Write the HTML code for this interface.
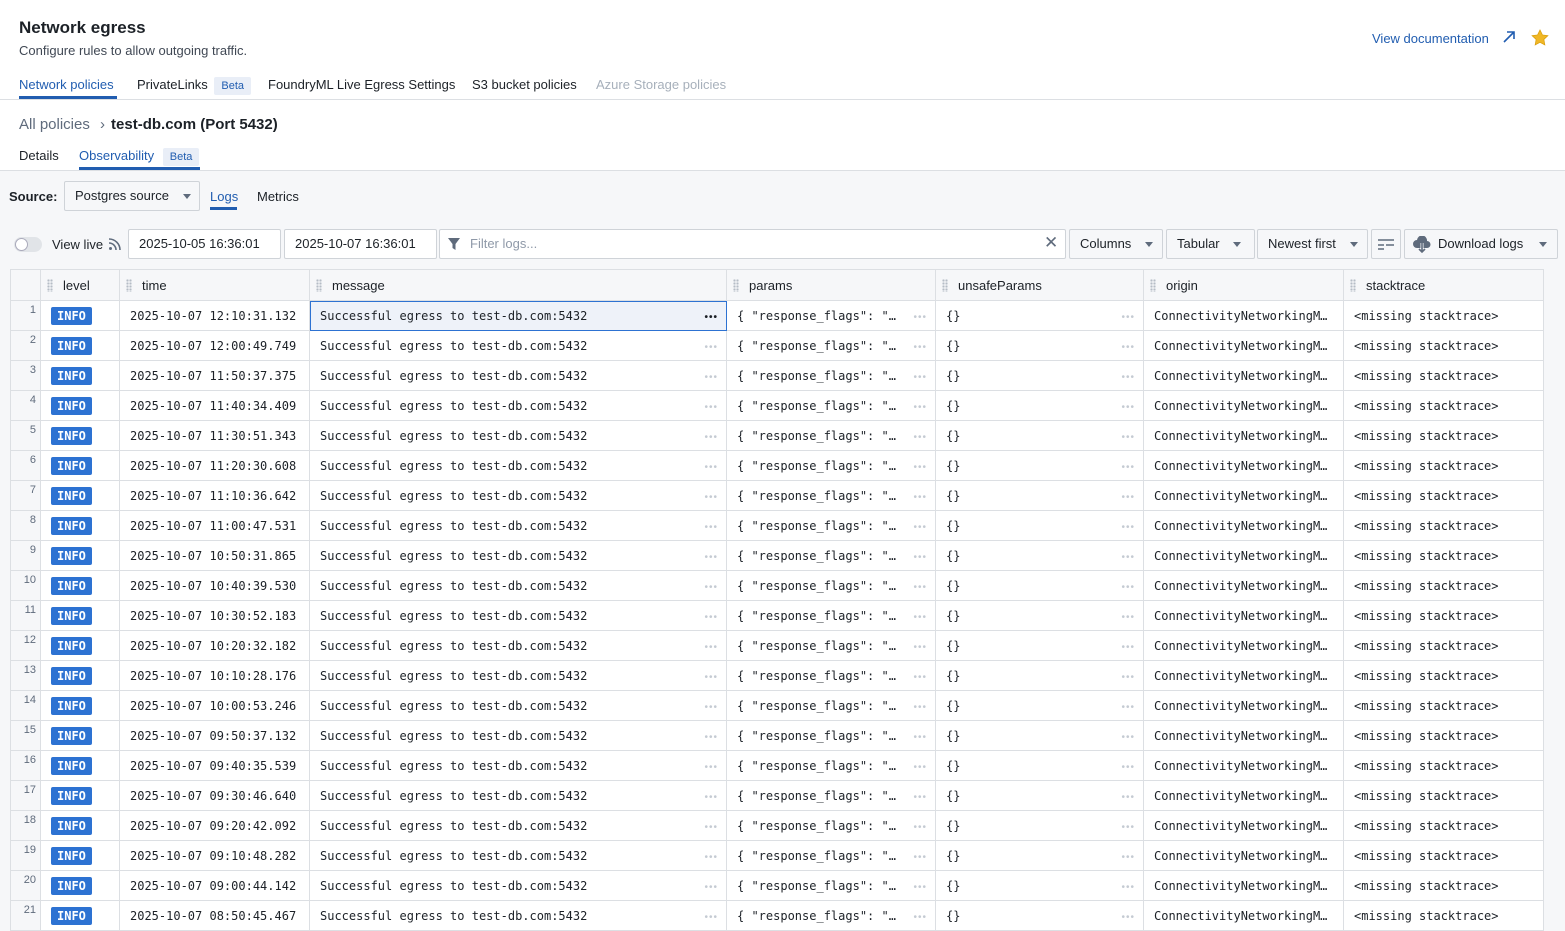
<!DOCTYPE html>
<html><head><meta charset="utf-8"><style>
*{box-sizing:border-box;margin:0;padding:0}
body{width:1565px;height:925px;overflow:hidden;font-family:"Liberation Sans",sans-serif;font-size:13px;color:#1c2127;background:#f6f7f9;position:relative}
.a{position:absolute;white-space:nowrap}
.top{position:absolute;left:0;top:0;width:1565px;height:171px;background:#fff;border-bottom:1px solid #dcdfe3}
.blue{color:#215db0}
.beta{background:#e9eef7;color:#215db0;font-size:11px;padding:3px 7px;border-radius:2px}
.ul{position:absolute;height:3px;background:#215db0}
.btn{position:absolute;top:229px;height:30px;background:#f6f7f9;border:1px solid #cfd3d8;border-radius:2px;padding:0 10px;line-height:28px;white-space:nowrap}
.car{display:inline-block;width:0;height:0;border-left:4px solid transparent;border-right:4px solid transparent;border-top:5px solid #5f6b7c;vertical-align:middle;margin-left:10px}
.inp{position:absolute;top:229px;height:30px;background:#fff;border:1px solid #cfd3d8;border-radius:2px;padding:0 10px;line-height:28px;white-space:nowrap}
table{position:absolute;left:10px;top:269px;border-collapse:collapse;table-layout:fixed;background:#fff;width:1533px}
td,th{border:1px solid #dcdfe3;height:30px;white-space:nowrap;overflow:hidden;font-weight:normal;text-align:left;padding:0 10px;position:relative}
th{background:#f6f7f9;height:31px;font-size:13px;padding-left:22px}
th .g{position:absolute;left:6px;top:9px;width:6px;height:13px;background:radial-gradient(circle,#b5bcc6 1px,transparent 1.3px) 0 0/3px 3px}
td{font-family:"DejaVu Sans Mono","Liberation Mono",monospace;font-size:12px;color:#1c2127}
td.n{background:#f6f7f9;font-family:"Liberation Sans",sans-serif;font-size:11px;color:#5f6b7c;text-align:right;vertical-align:top;padding:3px 4px 0 0}
.info{background:#2d72d2;color:#fff;font-weight:bold;font-size:12px;padding:2px 6px;border-radius:2px}
.dots{position:absolute;right:8px;top:11px;color:#c5cbd3;font-size:10px;letter-spacing:1px;font-family:"Liberation Sans",sans-serif}
.sel{background:#eef2f9;outline:1px solid #2d72d2;outline-offset:-1px}
.sel .dots{color:#1c2127;font-weight:bold}
</style></head><body>
<div class="top"></div>
<div class="a" style="left:19px;top:18px;font-size:17px;font-weight:bold">Network egress</div>
<div class="a" style="left:19px;top:43px;color:#404854">Configure rules to allow outgoing traffic.</div>
<div class="a blue" style="left:1372px;top:31px">View documentation</div>
<svg class="a" style="left:1502px;top:30px" width="14" height="14" viewBox="0 0 14 14"><path d="M2 12L12 2M5 2h7v7" stroke="#215db0" stroke-width="1.6" fill="none"/></svg>
<svg class="a" style="left:1531px;top:29px" width="18" height="18" viewBox="0 0 20 20"><path d="M10 1l2.7 5.6 6.1.8-4.5 4.2 1.1 6.1L10 14.8 4.6 17.7l1.1-6.1L1.2 7.4l6.1-.8z" fill="#f0b726" stroke="#d99e0b" stroke-width=".8"/></svg>
<div class="a blue" style="left:19px;top:77px">Network policies</div><div class="ul" style="left:19px;top:96px;width:98px"></div>
<div class="a" style="left:137px;top:77px">PrivateLinks <span class="beta" style="margin-left:3px">Beta</span></div>
<div class="a" style="left:268px;top:77px">FoundryML Live Egress Settings</div>
<div class="a" style="left:472px;top:77px">S3 bucket policies</div>
<div class="a" style="left:596px;top:77px;color:#a7b0bb">Azure Storage policies</div>
<div class="a" style="left:0;top:99px;width:1565px;height:1px;background:#dcdfe3"></div>
<div class="a" style="left:19px;top:116px;font-size:15px;color:#5f6b7c">All policies <span style="margin:0 6px">›</span><b style="color:#1c2127">test-db.com (Port 5432)</b></div>
<div class="a" style="left:19px;top:148px">Details</div>
<div class="a blue" style="left:79px;top:148px">Observability <span class="beta" style="margin-left:5px">Beta</span></div><div class="ul" style="left:79px;top:167px;width:121px"></div>
<div class="a" style="left:9px;top:189px;font-weight:bold">Source:</div>
<div class="a" style="left:64px;top:181px;width:136px;height:30px;background:#f6f7f9;border:1px solid #cfd3d8;border-radius:2px;padding:0 10px;line-height:28px">Postgres source <span class="car"></span></div>
<div class="a blue" style="left:210px;top:189px">Logs</div><div class="ul" style="left:210px;top:207px;width:27px"></div>
<div class="a" style="left:257px;top:189px">Metrics</div>
<div class="a" style="left:14px;top:237px;width:28px;height:15px;border-radius:8px;background:#e1e4e8"><div style="position:absolute;left:1px;top:1px;width:13px;height:13px;border-radius:50%;background:#fff;border:1px solid #aab"></div></div>
<div class="a" style="left:52px;top:237px">View live</div>
<svg class="a" style="left:108px;top:237px" width="14" height="14" viewBox="0 0 14 14"><circle cx="2.5" cy="11.5" r="1.5" fill="#5f6b7c"/><path d="M1 6a7 7 0 0 1 7 7M1 2a11 11 0 0 1 11 11" stroke="#5f6b7c" stroke-width="1.6" fill="none"/></svg>
<div class="inp" style="left:128px;width:153px">2025-10-05 16:36:01</div>
<div class="inp" style="left:284px;width:153px">2025-10-07 16:36:01</div>
<div class="inp" style="left:439px;width:627px;color:#8f99a8;padding-left:30px">Filter logs...</div>
<svg class="a" style="left:447px;top:237px" width="14" height="14" viewBox="0 0 14 14"><path d="M1 1h12L8.5 7v6L5.5 11V7z" fill="#5f6b7c"/></svg>
<div class="a" style="left:1044px;top:233px;font-size:17px;color:#5f6b7c">✕</div>
<div class="btn" style="left:1069px;width:94px">Columns <span class="car"></span></div>
<div class="btn" style="left:1166px;width:89px">Tabular <span class="car"></span></div>
<div class="btn" style="left:1257px;width:111px">Newest first <span class="car"></span></div>
<div class="btn" style="left:1371px;width:30px;padding:0"><svg style="position:absolute;left:6px;top:8px" width="16" height="12" viewBox="0 0 16 12"><path d="M0 2h16M0 7h6M8 7h8M0 11h6" stroke="#5f6b7c" stroke-width="1.5"/></svg></div>
<div class="btn" style="left:1404px;width:154px;padding-left:33px">Download logs <span class="car" style="margin-left:12px"></span><svg style="position:absolute;left:8px;top:6px" width="18" height="17" viewBox="0 0 18 17"><path d="M4 12a4 4 0 0 1 0-8 5 5 0 0 1 10 1 3.5 3.5 0 0 1 0 7" fill="#5f6b7c"/><path d="M9 7v9M6 13l3 3 3-3" stroke="#f6f7f9" stroke-width="3" fill="none"/><path d="M9 7v9M6 13l3 3 3-3" stroke="#5f6b7c" stroke-width="1.6" fill="none"/></svg></div>
<div class="a" style="left:1543px;top:269px;width:15px;height:656px;background:#f6f7f9;border-left:1px solid #dcdfe3"></div>
<table>
<colgroup><col style="width:30px"><col style="width:79px"><col style="width:190px"><col style="width:417px"><col style="width:209px"><col style="width:208px"><col style="width:200px"><col style="width:200px"></colgroup>
<tr><th style="background:#f6f7f9;padding:0"></th><th><span class="g"></span>level</th><th><span class="g"></span>time</th><th><span class="g"></span>message</th><th><span class="g"></span>params</th><th><span class="g"></span>unsafeParams</th><th><span class="g"></span>origin</th><th><span class="g"></span>stacktrace</th></tr>
<tbody id="tb">
</tbody></table>
<script>
var t=["12:10:31.132","12:00:49.749","11:50:37.375","11:40:34.409","11:30:51.343","11:20:30.608","11:10:36.642","11:00:47.531","10:50:31.865","10:40:39.530","10:30:52.183","10:20:32.182","10:10:28.176","10:00:53.246","09:50:37.132","09:40:35.539","09:30:46.640","09:20:42.092","09:10:48.282","09:00:44.142","08:50:45.467"];
var h="";for(var i=0;i<t.length;i++){h+='<tr><td class="n">'+(i+1)+'</td><td><span class="info">INFO</span></td><td>2025-10-07 '+t[i]+'</td><td'+(i==0?' class="sel"':'')+'>Successful egress to test-db.com:5432<span class="dots">•••</span></td><td>{ "response_flags": "…<span class="dots">•••</span></td><td>{}<span class="dots">•••</span></td><td>ConnectivityNetworkingM…</td><td>&lt;missing stacktrace&gt;</td></tr>';}
document.getElementById("tb").innerHTML=h;
</script>
</body></html>
